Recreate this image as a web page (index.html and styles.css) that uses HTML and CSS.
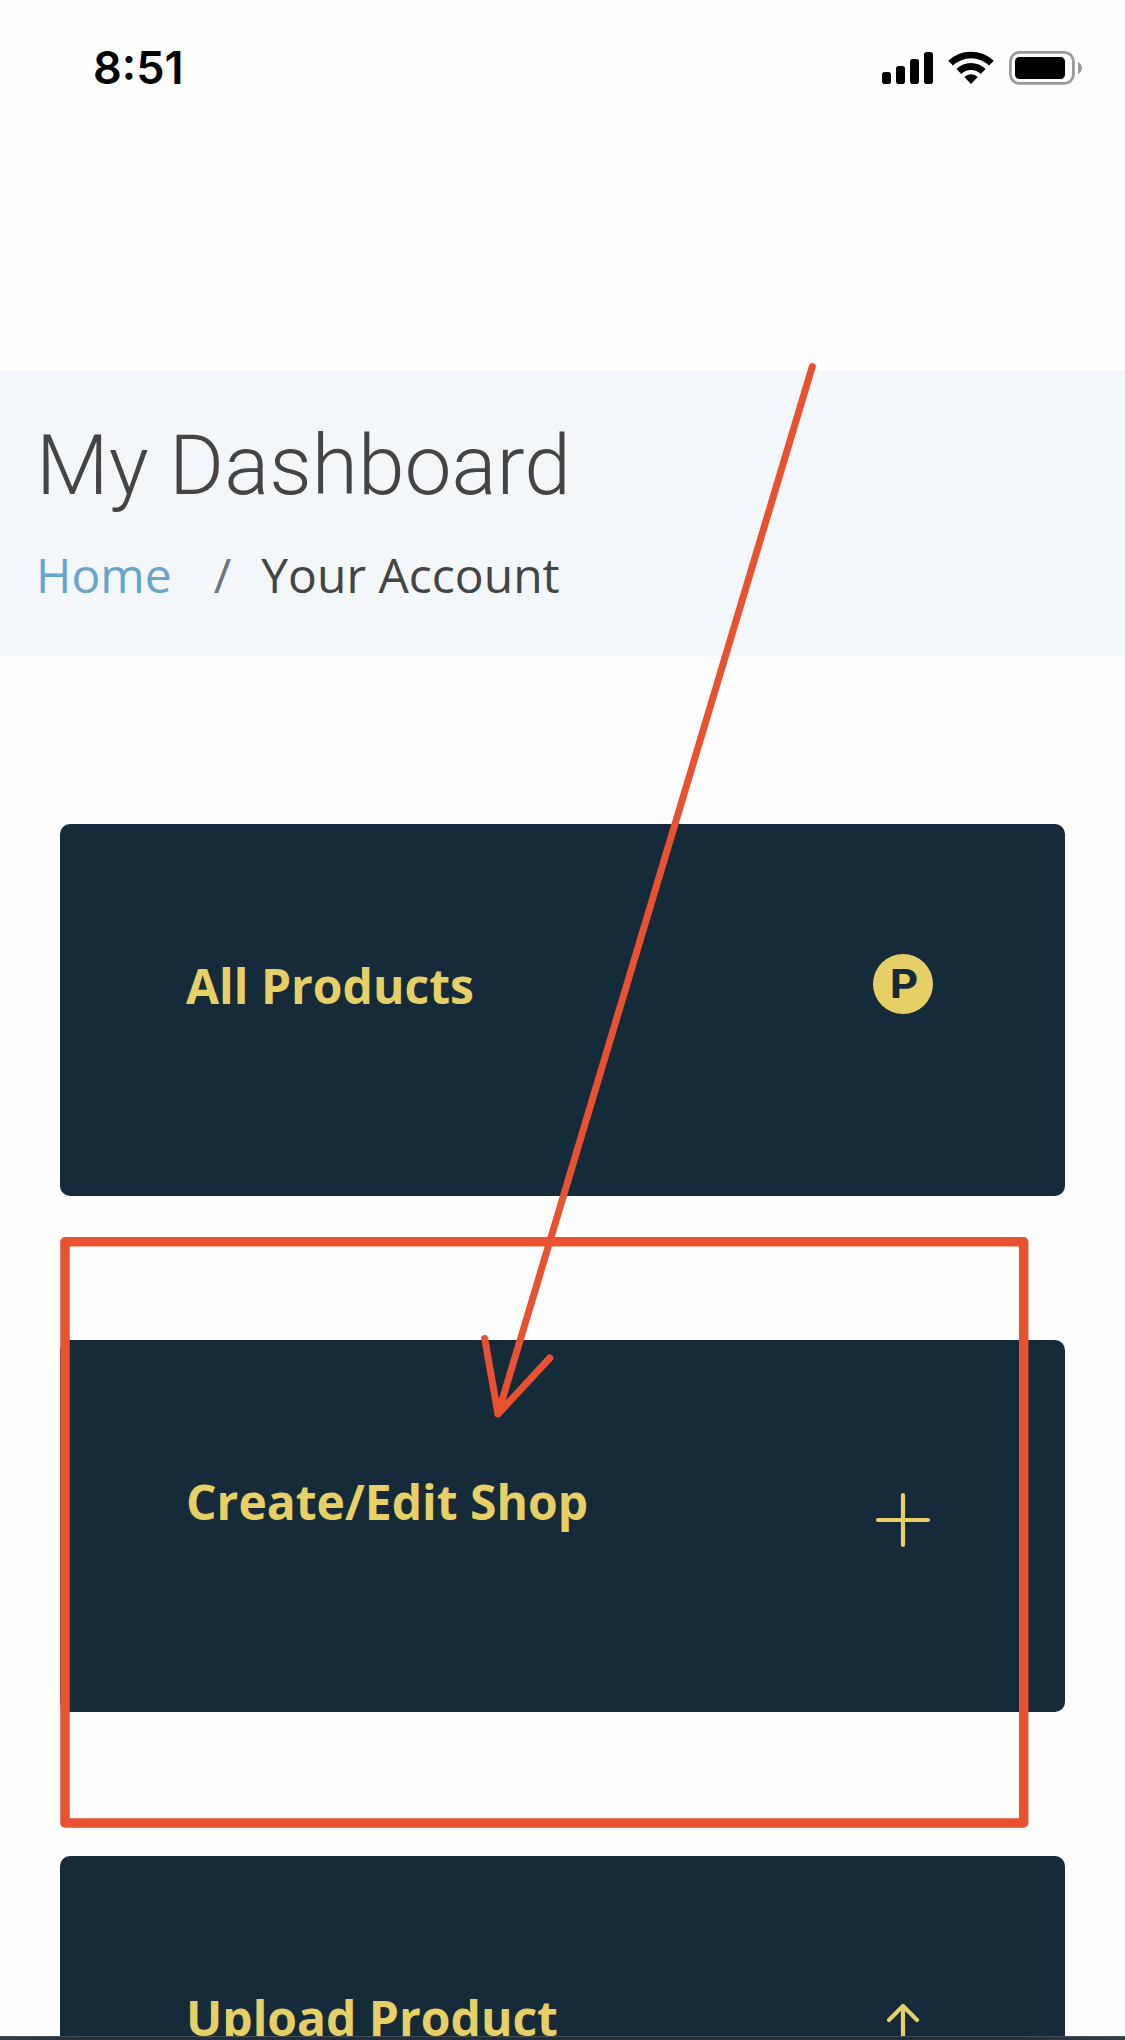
FILE: index.html
```html
<!DOCTYPE html>
<html lang="en">
<head>
<meta charset="utf-8">
<title>My Dashboard</title>
<link rel="stylesheet" href="styles.css">
</head>
<body>
<div class="screen">
  <header class="status-bar">
    <time class="clock">8:51</time>
    <svg class="status-icons" width="204" height="36" viewBox="880 50 204 36" aria-hidden="true">
      <rect x="882" y="72" width="9" height="12" rx="2.8"/>
      <rect x="896" y="66" width="9" height="18" rx="2.8"/>
      <rect x="910" y="59" width="9" height="25" rx="2.8"/>
      <rect x="924" y="52" width="9" height="32" rx="2.8"/>
      <path d="M948.2 60.8a33 33 0 0 1 45.600 0l-4.800 4.800a26 26 0 0 0-36 0z"/>
      <path d="M956.400 69a20.800 20.800 0 0 1 29.200 0l-4.900 4.900a14 14 0 0 0-19.400 0z"/>
      <path d="M964.300 77a9.500 9.500 0 0 1 13.400 0L971 84z"/>
      <rect x="1010.400" y="52.400" width="63" height="31" rx="9" fill="none" stroke="#9b9b9b" stroke-width="2.800"/>
      <rect x="1015" y="57" width="50" height="22" rx="4.500"/>
      <path d="M1078 62q4 2 4 6t-4 6z" fill="#9b9b9b"/>
    </svg>
  </header>

  <section class="page-header">
    <h1 class="title">My Dashboard</h1>
    <nav class="breadcrumb">
      <a class="crumb-link">Home</a>
      <span class="crumb-divider">/</span>
      <span>Your Account</span>
    </nav>
  </section>

  <main class="cards">
    <article class="card">
      <h2 class="card-title">All Products</h2>
      <span class="badge"><span class="badge-letter">P</span></span>
    </article>
    <article class="card">
      <h2 class="card-title">Create/Edit Shop</h2>
      <svg class="card-icon plus" viewBox="0 0 60 60"><path d="M30 5v50M5 30h50"/></svg>
    </article>
    <article class="card">
      <h2 class="card-title">Upload Product</h2>
      <svg class="card-icon upload" viewBox="0 0 60 60"><path d="M30 50V7M16 21L30 7l14 14"/></svg>
    </article>
  </main>

  <svg class="annotation" viewBox="0 0 1125 2040" aria-hidden="true">
    <rect x="65" y="1241.800" width="958.700" height="581.200" stroke-width="9.500"/>
    <path d="M812.300 366.500L498 1414M484.700 1338.500L498 1414L549.800 1358" stroke-width="7"/>
  </svg>
  <div class="bottom-bar"></div>
</div>
</body>
</html>
```

FILE: styles.css
```css
* { box-sizing: border-box; }

body {
  margin: 0;
  background: #fefefe;
}

.screen {
  position: relative;
  width: 1125px;
  height: 2040px;
  overflow: hidden;
}

.status-bar {
  height: 371px;
  padding: 50px 41px 0 93px;
  display: flex;
  justify-content: space-between;
  align-items: flex-start;
}

.clock {
  font: 600 45px/36px Inter, sans-serif;
  color: #000;
}

.status-icons { display: block; }

.page-header {
  height: 285px;
  padding: 45px 36px 0;
  background: #f3f7fa;
  color: #444;
}

.title {
  margin: 0;
  font: 300 84px/100px Roboto, sans-serif;
}

.breadcrumb {
  display: flex;
  margin-top: 26px;
  font: 400 48px/66px "Open Sans", sans-serif;
}

.crumb-link { color: #69a4cd; }

.crumb-divider {
  margin: 0 30px 0 42px;
  color: #6c757d;
}

.cards {
  padding: 168px 60px 0;
  display: flex;
  flex-direction: column;
  gap: 144px;
}

.card {
  flex: none;
  height: 372px;
  padding: 130px 132px 0 126px;
  display: flex;
  justify-content: space-between;
  align-items: flex-start;
  border-radius: 10px;
  background: #152b3a;
  color: #e6cf66;
}

.card-title {
  margin: -1px 0 0;
  font: 700 48px/66px "Open Sans", sans-serif;
}

.badge {
  display: flex;
  justify-content: center;
  width: 60px;
  height: 60px;
  padding-left: 2px;
  border-radius: 50%;
  background: #e6cf66;
  color: #152b3a;
  font: 700 40px/60px Inter, sans-serif;
}

.badge-letter { transform: scaleX(1.1); }

.card-icon {
  width: 60px;
  height: 60px;
  fill: none;
  stroke: currentColor;
  stroke-width: 4.2;
  stroke-linecap: round;
  stroke-linejoin: round;
}

.plus { margin-top: 20px; }
.upload { margin-top: 13px; }

.annotation {
  position: absolute;
  inset: 0;
  width: 1125px;
  height: 2040px;
  fill: none;
  stroke: #e95230;
  stroke-linecap: round;
  stroke-linejoin: round;
}

.bottom-bar {
  position: absolute;
  left: 0;
  right: 0;
  bottom: 0;
  height: 4px;
  border-top: 1px solid #45505a;
  background: linear-gradient(90deg, #3a3d40, #232f39 8%, #232f39 90%, #3a3d40);
}
```
